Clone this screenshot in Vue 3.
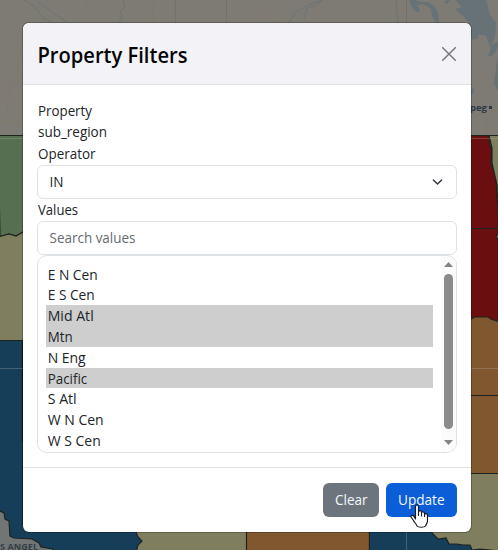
<script setup>
import { ref } from 'vue'

const options = ref([
  { label: 'E N Cen', selected: false, w: 50 },
  { label: 'E S Cen', selected: false, w: 47 },
  { label: 'Mid Atl', selected: true, w: 46 },
  { label: 'Mtn', selected: true, w: 25 },
  { label: 'N Eng', selected: false, w: 38 },
  { label: 'Pacific', selected: true, w: 39.5 },
  { label: 'S Atl', selected: false, w: 29 },
  { label: 'W N Cen', selected: false, w: 56 },
  { label: 'W S Cen', selected: false, w: 53 }
])
</script>

<template>
  <div class="screen">
    <svg class="map" viewBox="0 0 498 550" width="498" height="550" aria-hidden="true">
      <rect width="498" height="550" fill="#7e7b75" />
      <g fill="none" stroke="#6b7475" stroke-width="1">
        <path d="M24 0L34 6L43 18L53 23M38 2L47 8L54 14L61 18L68 23M123 0L125 7L120 11L122 17L119 23M323 0L315 6L307 8L304 18M288 23L296 12L310 4L322 0" />
        <path d="M175.5 0V23M226.500 0V23M406.500 0V23" stroke="#72716e" />
        <path d="M396 0L398 23" />
      </g>
      <g fill="none" stroke="#857764" stroke-width="1">
        <path d="M85 0L88 9L80 12M154 0L152 23M248 4L259 11L269 18L280 23M0 79L12 83L23 82M12 83L9 92L0 99M20 50L17 76M0 122L6 116L8 105L12 98L9 90M10 120L20 123" />
        <path d="M498 108L491 111L486 121L488 135" />
      </g>
      <path d="M409 0L413 9L418 13L420 10L417 5L423 4L431 9L432 16L436 23H439L438 13L434 6L428 2L420 2L416 0ZM444 2L447 0H450L447 4ZM455 0L462 7L455 9L463 16L469 23L472 40L479 38L478 34L486 36L490 47L495 37L496 23L490 15L486 0ZM498 42L492 44L488 56L492 56L498 48ZM498 55L496 69L494 83L498 91ZM471 89L474 88L474 93L471 94Z" fill="#667276" />
      <text x="467" y="111" class="place peg">ipeg</text>
      <rect x="489" y="106" width="3" height="3" fill="#303946" />
      <g stroke="#1c2420" stroke-width="1.2">
        <path d="M-2 135.500H30V236L23 232L16 236L9 234L0 237Z" fill="#556f50" />
        <path d="M-2 237L9 234L16 236L23 232L30 233V341H-2Z" fill="#7f7e5e" />
        <path d="M465 135.500H489L490 145L492 150L491 163L496 178L498 210V550H465Z" fill="#6b0e10" />
        <path d="M489 135.500H500V214H498L497 185L492 163L492 148Z" fill="#7f7e5e" />
        <path d="M465 228.500H500" fill="none" />
        <path d="M498 234L496 237L498 239" fill="#7e7b75" />
        <path d="M465 320L471 319L475 317H488L491 319L500 322V474H465Z" fill="#80572f" />
        <path d="M465 395.500H500" fill="none" />
        <path d="M-2 340.500H23V525H150V552H-2Z" fill="#163e59" />
        <path d="M136 525V532L138 537L142 541L138 545L136 552H247V525Z" fill="#7f7e5e" />
        <path d="M246.500 525H369.500V552H246.500Z" fill="#80572f" />
        <path d="M369.500 525H500V552H369.500Z" fill="#163e59" />
        <path d="M465 473.500H500V551L480 549L472 550L470 545L463 545L457 544L449 544L446 538L438 539L432 533V528H465Z" fill="#7f7e5e" />
        <path d="M-2 510L4 513L5 519L9 521L10 536L14 538L32 539L39 543L41 547L53 549V554H-2Z" fill="#717675" />
      </g>
      <path d="M22.500 341V442" stroke="#171d1c" stroke-width="1.500" />
      <path d="M0 368.500H23M470 368.500H498M471 138.500H498M406.500 532V550M0 138.500H23" stroke="#aaa" stroke-opacity=".32" fill="none" />
      <text x="0" y="550" class="place angeles">S ANGEL</text>
    </svg>

    <section class="modal" role="dialog" aria-label="Property Filters">
      <header class="modal-header">
        <svg class="title" width="160" height="34"><text x="-.5" y="26" textLength="150" lengthAdjust="spacingAndGlyphs">Property Filters</text></svg>
        <button class="close" aria-label="Close">
          <svg width="14" height="14" viewBox="0 0 14 14"><path d="M.7 .7L13.300 13.300M13.300 .7L.7 13.300" stroke="#7b7a7d" stroke-width="1.550" stroke-linecap="round" /></svg>
        </button>
      </header>

      <div class="modal-body">
        <svg class="line" width="200" height="21"><text x="0" y="15" textLength="54" lengthAdjust="spacingAndGlyphs">Property</text></svg>
        <svg class="line" width="200" height="21"><text x="0" y="15" textLength="69" lengthAdjust="spacingAndGlyphs">sub_region</text></svg>
        <svg class="line" width="200" height="22"><text x="0" y="16" textLength="57.500" lengthAdjust="spacingAndGlyphs">Operator</text></svg>
        <div class="control">
          <svg class="line" width="60" height="21"><text x="-.5" y="15" textLength="14" lengthAdjust="spacingAndGlyphs">IN</text></svg>
          <svg width="11" height="12" viewBox="0 0 16 16" fill="none"><path d="M2 5L8 11L14 5" stroke="#343a40" stroke-width="2.200" stroke-linecap="round" stroke-linejoin="round" /></svg>
        </div>
        <svg class="line" width="200" height="22"><text x="0" y="16" textLength="40" lengthAdjust="spacingAndGlyphs">Values</text></svg>
        <div class="control">
          <svg class="line muted" width="200" height="21"><text x="-.5" y="15" textLength="86" lengthAdjust="spacingAndGlyphs">Search values</text></svg>
        </div>
        <div class="listbox">
          <ul>
            <li v-for="o in options" :key="o.label" :class="{ selected: o.selected }">
              <svg class="line" width="120" height="20"><text x="-.3" y="15.700" :textLength="o.w" lengthAdjust="spacingAndGlyphs">{{ o.label }}</text></svg>
            </li>
          </ul>
          <div class="scrollbar">
            <svg width="9" height="5" viewBox="0 0 9 5"><path d="M0 5L4.500 0L9 5Z" fill="#858585" /></svg>
            <div class="thumb"></div>
            <svg width="9" height="5" viewBox="0 0 9 5"><path d="M0 0H9L4.500 5Z" fill="#858585" /></svg>
          </div>
        </div>
      </div>

      <footer class="modal-footer">
        <button class="btn clear"><svg class="line" width="33" height="21"><text x="0" y="15" textLength="32.500" lengthAdjust="spacingAndGlyphs">Clear</text></svg></button>
        <button class="btn update"><svg class="line" width="47" height="21"><text x="0" y="15" textLength="46.500" lengthAdjust="spacingAndGlyphs">Update</text></svg></button>
      </footer>
    </section>

    <svg class="cursor" width="19" height="25" viewBox="0 0 19 25" aria-hidden="true">
      <path d="M5.500 15V2.700C5.500 .3 8.500 .3 8.500 2.700V8.200C9 6 11.300 6.200 11.500 8.200V9C12 7.200 14.300 7.500 14.500 9.400V10.500C15 9 17.500 9.300 17.500 11.500V17C17.500 19 16 20.500 15.500 22C14.500 23.600 8 23.600 7 22C6.500 20 4 18 3.500 16.500L1.300 13.300C.2 11.500 2.500 10.700 3.700 12Z" fill="white" stroke="#171725" stroke-width="1.150" stroke-linejoin="round" />
      <path d="M8.500 8V12M11.500 9V12.500M14.500 10V13" stroke="#171725" stroke-width="1.100" />
    </svg>
  </div>
</template>

<style>
body { margin: 0; overflow: hidden; }
</style>

<style scoped>
* { box-sizing: border-box; }
.screen { position: relative; width: 498px; height: 550px; padding: 22px 26px 17px 22px; overflow: hidden; font-family: "Open Sans", "Noto Sans", sans-serif; font-size: 14px; color: #212529; }
.map { position: absolute; left: 0; top: 0; }
.place { font-family: "Open Sans", sans-serif; font-weight: 700; fill: #303946; }
.peg { font-size: 9.500px; }
.angeles { font-size: 9px; letter-spacing: .1px; fill: #343c45; }
.modal { position: relative; display: flex; flex-direction: column; width: 450px; height: 511px; background: #fff; border: 1px solid rgba(0, 0, 0, .25); background-clip: padding-box; border-radius: 7px; overflow: hidden; }
.modal-header { display: flex; align-items: center; justify-content: space-between; height: 62px; padding: 0 15px; background: #f3f2f7; border-bottom: 1px solid #dee2e6; flex: none; }
.title { font-size: 21px; font-weight: 600; fill: #050506; overflow: visible; }
.close { border: 0; padding: 0; background: none; width: 14px; height: 14px; }
.close svg { display: block; }
.modal-body { flex: 1; padding: 16px 14px 0; }
.line { display: block; overflow: visible; fill: #212529; }
.modal-body > .line { margin-left: .5px; }
.control { display: flex; align-items: center; justify-content: space-between; height: 34px; padding: 0 13px 0 12px; border: 1px solid #dee2e6; border-radius: 6px; background: #fff; }
.line.muted { fill: #666b70; }
.listbox { display: flex; justify-content: space-between; height: 198px; border: 1px solid #dee2e6; border-radius: 10px; overflow: hidden; }
ul { list-style: none; margin: 0; padding: 7.600px 0 0 8px; width: 395px; }
li { height: 20.800px; padding-left: 2px; }
li.selected { background: #cecece; }
.scrollbar { display: flex; flex-direction: column; align-items: center; width: 15px; padding: 6px 0; gap: 7px; background: #fbfbfb; }
.thumb { width: 9px; height: 155px; border-radius: 5px; background: #8b8b8b; flex: none; }
.scrollbar svg { flex: none; }
.scrollbar svg:last-child { margin-top: 4px; }
.modal-footer { display: flex; justify-content: flex-end; gap: 7px; height: 65px; padding: 15px 14px 0; border-top: 1px solid #dee2e6; flex: none; }
.btn { display: flex; justify-content: center; align-items: center; height: 34px; padding: 0; border: 0; border-radius: 6px; font: inherit; }
.btn .line { fill: #f7f8fa; }
.clear { width: 56px; background: #6c757d; }
.update { width: 71px; background: #0b5ed7; }
.cursor { position: absolute; left: 410px; top: 504px; }
</style>
